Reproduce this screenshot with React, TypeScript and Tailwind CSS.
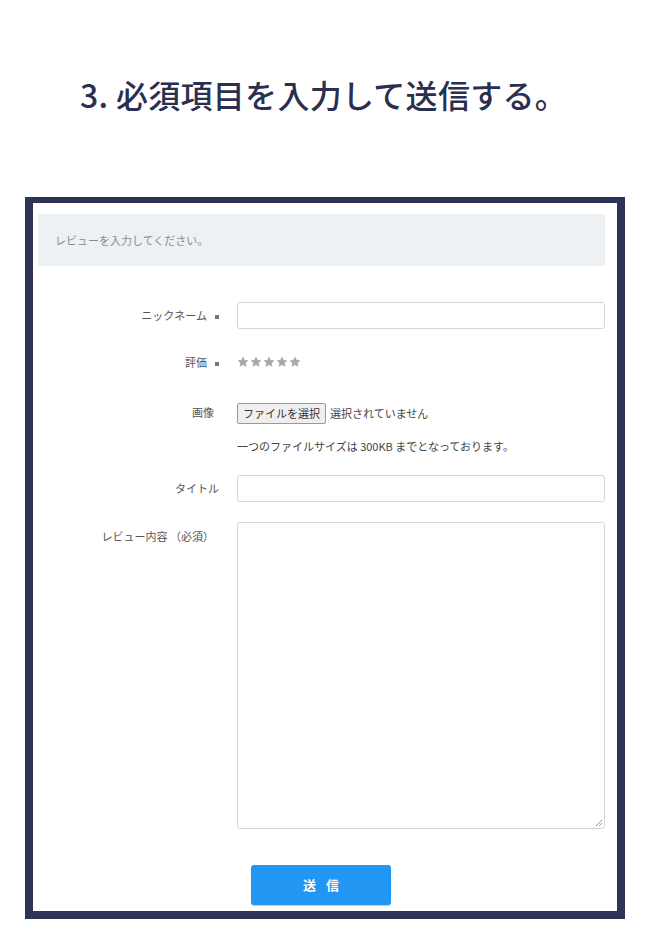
const font = { fontFamily: '"Noto Sans CJK JP", "Noto Sans", sans-serif' };

function Req() {
  return <span className="inline-block w-[4px] h-[4px] bg-[#777] ml-[8px] align-middle" />;
}

function Stars() {
  return (
    <div className="flex gap-[1px]">
      {[0, 1, 2, 3, 4].map((i) => (
        <svg key={i} width="12" height="12" viewBox="0 0 24 24" fill="#a8a8a8">
          <path
            d="M12 2.5l2.8 6.1 6.7.7-5 4.6 1.4 6.6L12 17.2l-5.9 3.3 1.4-6.6-5-4.6 6.7-.7z"
            stroke="#a8a8a8"
            strokeWidth="1.5"
            strokeLinejoin="round"
          />
        </svg>
      ))}
    </div>
  );
}

export default function App() {
  return (
    <div className="w-[650px] h-[947px] bg-white overflow-hidden" style={font}>
      {/* Heading */}
      <h1 className="pt-[70px] pl-[80px] text-[32px] leading-[48px] font-medium text-[#2b2f4f] tracking-[0.3px]">
        3. 必須項目を入力して送信する。
      </h1>

      {/* Screenshot frame */}
      <div className="mt-[79px] ml-[25px] w-[600px] h-[722px] border-[8px] border-t-[6px] border-[#2e3358] bg-white">
        <div className="pt-[11px] pl-[5px] pr-[12px]">
          <div className="h-[52px] bg-[#eef1f4] flex items-center pl-[17px] text-[11px] text-[#8a8a8a]">
            レビューを入力してください。
          </div>
        </div>

        <div className="mt-[36px] text-[11px] text-[#555]">
          {/* nickname */}
          <div className="flex items-center">
            <div className="w-[188px] text-right pr-[2px]">
              ニックネーム<Req />
            </div>
            <div className="ml-[16px] w-[368px] h-[27px] border border-[#d6d6d6] rounded-[3px]" />
          </div>

          {/* rating */}
          <div className="flex items-center mt-[25px]">
            <div className="w-[188px] text-right pr-[2px]">
              評価<Req />
            </div>
            <div className="ml-[16px]">
              <Stars />
            </div>
          </div>

          {/* image */}
          <div className="flex mt-[32px]">
            <div className="w-[188px] text-right pr-[7px] pt-[1px]">画像</div>
            <div className="ml-[16px]">
              <div className="flex items-center gap-[4px]">
                <div className="h-[21px] px-[5px] border border-[#9a9a9a] rounded-[2px] bg-[#efefef] flex items-center text-[#333]">
                  ファイルを選択
                </div>
                <span className="text-[#444]">選択されていません</span>
              </div>
              <div className="mt-[14px] text-[#444]">一つのファイルサイズは 300KB までとなっております。</div>
            </div>
          </div>

          {/* title */}
          <div className="flex items-center mt-[21px]">
            <div className="w-[188px] text-right pr-[2px]">タイトル</div>
            <div className="ml-[16px] w-[368px] h-[27px] border border-[#d6d6d6] rounded-[3px]" />
          </div>

          {/* body */}
          <div className="flex mt-[20px]">
            <div className="w-[188px] text-right pr-[7px] pt-[6px]">レビュー内容 （必須）</div>
            <div className="ml-[16px] w-[368px] h-[307px] border border-[#d6d6d6] rounded-[3px] relative">
              <svg className="absolute right-[1px] bottom-[1px]" width="8" height="8" viewBox="0 0 8 8">
                <path d="M7 1L1 7M7 4L4 7" stroke="#999" strokeWidth="1" />
              </svg>
            </div>
          </div>

          {/* submit */}
          <div className="mt-[36px] ml-[218px]">
            <button className="w-[140px] h-[40px] bg-[#2196f3] rounded-[3px] text-white text-[13px] font-bold tracking-[10px] pl-[10px] shadow-[0_1px_1px_rgba(0,0,0,0.2)]">
              送信
            </button>
          </div>
        </div>
      </div>
    </div>
  );
}
